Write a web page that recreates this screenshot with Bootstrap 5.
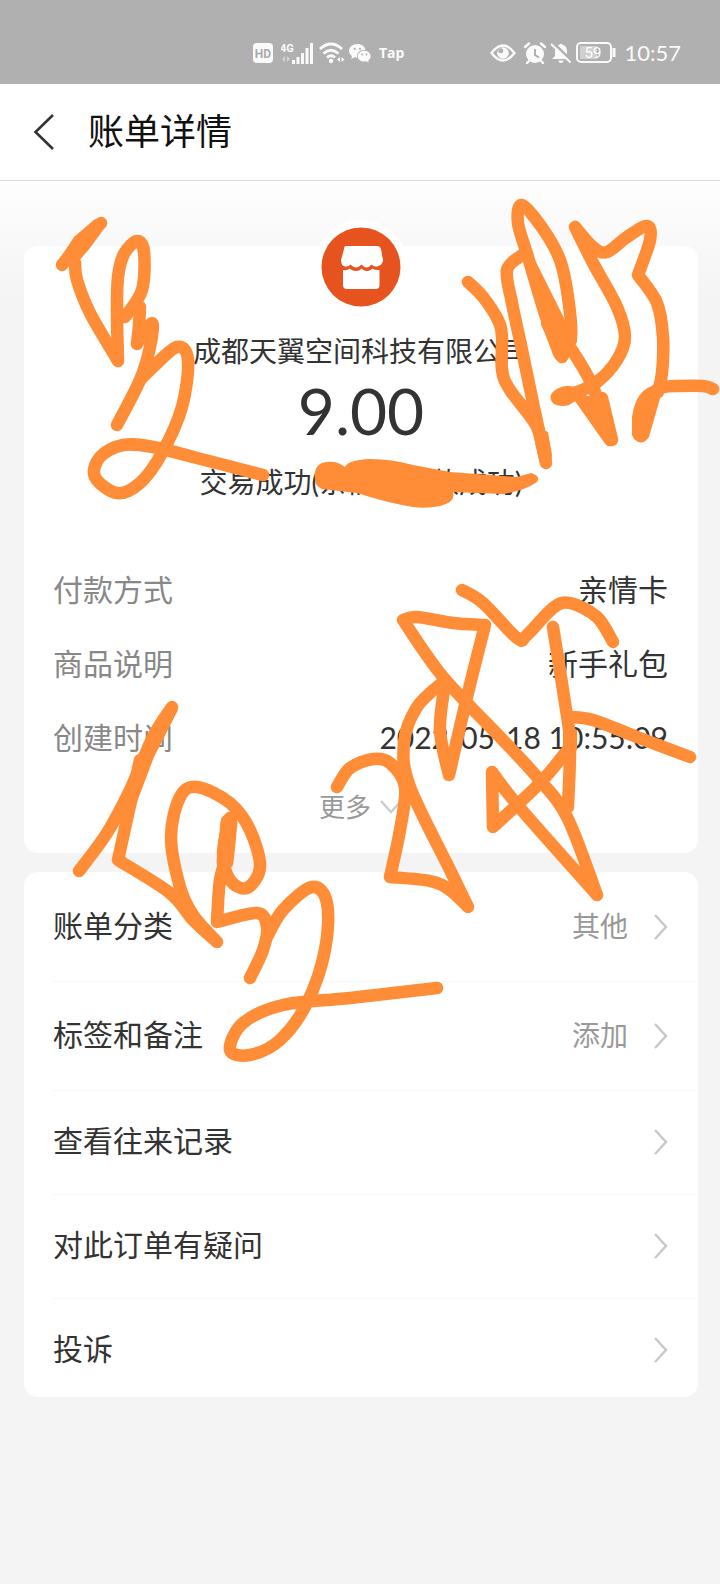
<!DOCTYPE html>
<html lang="zh-CN">
<head>
<meta charset="utf-8">
<meta name="viewport" content="width=device-width, initial-scale=1">
<title>账单详情</title>
<link rel="stylesheet" href="https://cdn.jsdelivr.net/npm/bootstrap@5.3.0/dist/css/bootstrap.min.css">
<style>
body { background: #f4f4f4; color: #333; font-family: Lato, "Noto Sans CJK SC", sans-serif; font-size: 30px; line-height: 44px; overflow-x: hidden; }
.screen { min-height: 100vh; }
.status-bar { height: 84px; padding: 43px 39px 0 0; background: #b0b0b0; color: #fafafa; }
.status-bar svg { display: block; flex: none; }
.status-group { height: 20px; }
.status-group + .status-group { margin-left: 86px; }
.tap-label { font: 700 14px/20px "Open Sans", sans-serif; }
.hd-label, .net-label, .level-label { font-family: Roboto, sans-serif; }
.clock { font-size: 22px; line-height: 24px; }
.title-bar { height: 97px; padding: 0 32px; background: #fff; border-bottom: 1px solid #dadada; }
.title-bar h1 { font-size: 36px; line-height: 48px; padding-bottom: 2px; color: #111; }
.back-btn { width: 24px; height: 40px; }
.content-area { padding: 65px 22px 0 24px; background: linear-gradient(#fefefe, #f4f4f4 120px); }
.panel { background: #fff; border-radius: 14px; }
.bill { height: 607px; }
.shop-logo { width: 96px; height: 96px; margin-top: -27px; }
.shop-name { font-size: 28px; line-height: 40px; margin-top: 16px; }
.amount { font-size: 64px; line-height: 72px; margin-top: 4px; }
.result { font-size: 28px; line-height: 40px; margin-top: 15px; margin-bottom: 65px; }
.detail-row { padding: 0 30px 0 29px; margin-bottom: 30px; }
.detail-row dt { color: #888; }
.soft-text { color: #999; }
.more-btn { font-size: 26px; line-height: 36px; }
.options { margin-top: 19px; }
.option { height: 104px; padding: 0 30px 0 29px; color: #333; position: relative; }
.option.tall { height: 109px; }
.option:last-child { height: 99px; padding-top: 4px; }
.option span { padding-bottom: 4px; }
.option + .option::before { content: ""; position: absolute; top: 0; left: 28px; right: 0; height: 1px; background: #f8f8f8; }
.option .soft-text { font-size: 28px; padding-bottom: 2px; margin-right: 26px; }
.ink { position: absolute; top: 0; left: 0; pointer-events: none; }
</style>
</head>
<body>
<div class="screen position-relative">
  <div class="status-bar d-flex align-items-start justify-content-end">
    <div class="status-group d-flex align-items-center">
      <svg width="20" height="20" viewBox="0 0 20 20"><rect width="20" height="20" rx="4" fill="#fafafa"/><text class="hd-label" x="10" y="15" font-size="12" font-weight="700" text-anchor="middle" fill="#aaa">HD</text></svg>
      <svg class="ms-2" width="34" height="22" viewBox="0 0 34 22" fill="#fafafa"><text class="net-label" x="-1" y="10" font-size="11" font-weight="700">4G</text><g opacity=".5"><path d="M1 17l3-3v6zM9 17l-3-3v6z"/></g><path d="M11 18h3v4h-3zM15.500 15h3v7h-3zM20 11h3v11h-3zM24.500 6h3v16h-3zM29 1h3v21h-3z"/></svg>
      <svg class="ms-1" width="26" height="22" viewBox="0 0 26 22" fill="none" stroke="#fafafa" stroke-width="2.800"><path d="M1 7Q12 -3 23 7M4.500 11.500Q12 5 19.500 11.500M8 15.500Q12 12 16 15.500"/><circle cx="12" cy="19" r="2.200" fill="#fafafa" stroke="none"/><path d="M21 15v5l-3-2.500zM22.500 15v5l3-2.500z" fill="#fafafa" stroke="none"/></svg>
      <svg class="ms-1" width="22" height="20" viewBox="0 0 22 20" fill="#fafafa"><path d="M8.500 1C3.500 1 0 4 0 7.800c0 2.200 1.200 4 3 5.200l-.7 3 3.200-1.700 2.500.4C7.500 9.500 11 6.500 16.500 6.700 15.500 3.200 12.500 1 8.500 1z"/><path d="M15.300 7.700c-3.800 0-6.600 2.500-6.600 5.500s2.800 5.400 6.600 5.400l2-.3 2.400 1.300-.5-2.200c1.600-1 2.500-2.500 2.500-4.200 0-3-2.700-5.500-6.400-5.500z"/><g fill="#b0b0b0"><circle cx="5.700" cy="5.800" r="1.100"/><circle cx="11" cy="5.800" r="1.100"/><circle cx="13.200" cy="11.600" r="1"/><circle cx="17.500" cy="11.600" r="1"/></g></svg>
      <span class="tap-label ms-2">Tap</span>
    </div>
    <div class="status-group d-flex align-items-center">
      <svg width="26" height="20" viewBox="0 0 26 20"><path d="M1.500 10Q13-5 24.500 10 13 25 1.500 10z" fill="none" stroke="#fafafa" stroke-width="2.400"/><circle cx="13" cy="10" r="5.800" fill="#fafafa"/><circle cx="10.800" cy="7.800" r="2.500" fill="#b0b0b0"/></svg>
      <svg class="ms-2" width="22" height="22" viewBox="0 0 22 22"><circle cx="11" cy="12" r="9" fill="#fafafa"/><path d="M1 5l4-3.500M21 5l-4-3.500M5 19l-2 2M17 19l2 2" stroke="#fafafa" stroke-width="2.400" stroke-linecap="round"/><path d="M11 7v6l4 2.500" fill="none" stroke="#aaa" stroke-width="1.800"/></svg>
      <svg class="ms-1" width="22" height="22" viewBox="0 0 22 22" fill="#fafafa"><path d="M2 17l3-3V9c0-3 2-5.500 4.500-6.200a1.600 1.600 0 013 0C15.500 3.500 17 6 17 9v5l3 3zM8.500 18.500h5a2.500 2.500 0 01-5 0z"/><path d="M2.500 0L22 19" stroke="#b0b0b0" stroke-width="2.500"/><path d="M1 2l19.500 18.500" stroke="#fafafa" stroke-width="2"/></svg>
      <svg class="ms-1" width="40" height="22" viewBox="0 0 40 22"><rect x="1" y="1" width="34" height="19" rx="4" fill="none" stroke="#fafafa" stroke-width="2"/><path d="M4 4h17v13H4z" fill="#d0d0d0"/><path d="M38 6v9" stroke="#fafafa" stroke-width="3"/><text class="level-label" x="17" y="16" font-size="15" text-anchor="middle" fill="#fff">59</text></svg>
      <span class="clock ms-2">10:57</span>
    </div>
  </div>

  <header class="title-bar d-flex align-items-center">
    <button type="button" class="back-btn btn p-0 border-0 d-flex align-items-center" aria-label="返回"><svg width="24" height="36" viewBox="0 0 24 36" fill="none" stroke="#333" stroke-width="2.600"><path d="M21 1L3.500 18 21 35"/></svg></button>
    <h1 class="fw-normal mb-0 ms-4 ps-2">账单详情</h1>
  </header>

  <main class="content-area">
    <section class="bill panel d-flex flex-column">
      <div class="text-center">
        <svg class="shop-logo d-block mx-auto" viewBox="0 0 96 96"><circle cx="48" cy="48" r="47" fill="#fff"/><circle cx="48" cy="48" r="39.500" fill="#e6531e"/><path d="M33 27h31q3 0 4 3l2 11c0 4-4 7-8 6.500q-2-.5-3.500-2-2.500 3-5 3t-5-3q-2.500 3-5.500 3t-5.500-3q-2 2-3.500 2c-4 .5-6-2.500-6-6.500l3-11q0-3 2-3z" fill="#fff"/><path d="M30 51q4 1 6.500-1.500 3 2.500 6.500 2.500t5.500-2.500q2.500 2.500 5.500 2.500t5.500-2.500q3 2 7 1.500v15q0 4-4 4H34q-4 0-4-4z" fill="#fff"/></svg>
        <div class="shop-name">成都天翼空间科技有限公司</div>
        <div class="amount">9.00</div>
        <div class="result">交易成功(亲情卡付款成功)</div>
      </div>
      <dl class="mb-0">
        <div class="detail-row d-flex justify-content-between"><dt class="fw-normal">付款方式</dt><dd class="mb-0">亲情卡</dd></div>
        <div class="detail-row d-flex justify-content-between"><dt class="fw-normal">商品说明</dt><dd class="mb-0">新手礼包</dd></div>
        <div class="detail-row d-flex justify-content-between"><dt class="fw-normal">创建时间</dt><dd class="mb-0">2022-05-18 10:55:09</dd></div>
      </dl>
      <button type="button" class="more-btn soft-text btn p-0 border-0 mx-auto d-flex align-items-center gap-2">更多<svg width="24" height="14" viewBox="0 0 24 14" fill="none" stroke="#ccc" stroke-width="2.400"><path d="M2 1l10 11L22 1"/></svg></button>
    </section>

    <nav class="options panel">
      <a href="#" class="option tall d-flex align-items-center text-decoration-none"><span class="me-auto">账单分类</span><span class="soft-text">其他</span><svg width="14" height="26" viewBox="0 0 14 26" fill="none" stroke="#c8c8c8" stroke-width="2.400"><path d="M1 1l11 12L1 25"/></svg></a>
      <a href="#" class="option tall d-flex align-items-center text-decoration-none"><span class="me-auto">标签和备注</span><span class="soft-text">添加</span><svg width="14" height="26" viewBox="0 0 14 26" fill="none" stroke="#c8c8c8" stroke-width="2.400"><path d="M1 1l11 12L1 25"/></svg></a>
      <a href="#" class="option d-flex align-items-center text-decoration-none"><span class="me-auto">查看往来记录</span><svg width="14" height="26" viewBox="0 0 14 26" fill="none" stroke="#c8c8c8" stroke-width="2.400"><path d="M1 1l11 12L1 25"/></svg></a>
      <a href="#" class="option d-flex align-items-center text-decoration-none"><span class="me-auto">对此订单有疑问</span><svg width="14" height="26" viewBox="0 0 14 26" fill="none" stroke="#c8c8c8" stroke-width="2.400"><path d="M1 1l11 12L1 25"/></svg></a>
      <a href="#" class="option d-flex align-items-center text-decoration-none"><span class="me-auto">投诉</span><svg width="14" height="26" viewBox="0 0 14 26" fill="none" stroke="#c8c8c8" stroke-width="2.400"><path d="M1 1l11 12L1 25"/></svg></a>
    </nav>
  </main>

  <!-- freehand marker strokes over the bill -->
  <svg class="ink" id="ink" width="720" height="1100" viewBox="0 0 720 1100" fill="none" stroke="#ff8c37" stroke-width="12.500" stroke-linecap="round" stroke-linejoin="round" aria-hidden="true">
    <g fill="#ff8c37" stroke="none">
      <path d="M315 480Q313 467 322 463 335 459 345 467 348 460 370 459 392 459 413 465L450 472 517 477 531 473Q541 476 537 482 524 491 503 494L453 492Q456 502 440 506 426 509 413 507 388 503 357 493L322 489Q315 486 315 480z"/>
      <path d="M527 253L541 312 541 325 557 357Q562 364 567 359L577 342 577 320 565 320 536 262z"/>
      <path d="M542 325L550 320 562 350 562 362Q556 362 553 355z"/>
      <path d="M551 400C548 392 560 386 568 386L578 387 582 397 569 405C562 407 553 406 551 400z"/>
      <path d="M632 435L632 417Q636 390 653 386L663 388 649 437Q642 447 634 439z"/>
      <path d="M165 708L178 710 154 757 129 823 118 815 140 760z"/>
      <path d="M57 263L74 237 95 219 106 226 90 248 78 262z"/>
      <path d="M531 425L548 432 552 455 551 464 540 464z"/>
      <path d="M563 730L577 730 577 750 563 757z"/>
    </g>
  </svg>
</div>
<script src="https://cdn.jsdelivr.net/npm/bootstrap@5.3.0/dist/js/bootstrap.bundle.min.js"></script>
<script>
// Each stroke is a list of x,y points; "/" marks a sharp corner at the point before it.
const strokes = [
  '62,265 80,243 101,223',
  '75,263 77,280 90,313 118,361 / 117,313 118,277 124,254 137,241 144,252 142,290 125,317',
  '140,307 139,325 137,344 / 152,323 150,347 140,380 117,425',
  '140,380 153,367 177,347 188,360 182,407 162,453 140,483 117,493 95,477 100,457 123,445 153,447 197,458 263,475',
  '468,282 483,297 498,320 502,337 502,370 510,390 537,427 546,463 / 533,403 522,350 512,303 507,270 522,255',
  '562,357 547,320 528,257 518,223 522,205 543,229 560,260 568,297 571,337 562,357',
  '572,350 593,387 610,440 / 579,396',
  '602,398 612,440 / 588,402',
  '560,397 575,393 597,382 617,360 625,337 617,307 593,263 575,227 / 593,247 607,252 627,237 647,226 650,240 638,275 / 657,303 663,337 662,373 658,392',
  '655,391 664,387 677,386 703,386 713,389',
  '462,590 483,603 517,638 527,635 553,608 570,603 597,617 613,642',
  '553,627 565,703 570,743 568,807',
  '570,717 593,720 637,737 690,757',
  '570,747 540,783 493,827 / 492,772 / 520,808 597,895 / 567,817 537,777 500,737 443,677 403,620 / 417,617 453,623 485,625 / 467,697 449,775 / 440,730 445,683',
  '443,682 417,707 404,743 410,787 450,870 468,907 / 450,890 430,881 390,877 / 400,830 405,787 390,763 373,759 350,768 337,787',
  '172,707 153,737 130,790 107,833 79,871',
  '140,760 118,860 / 170,893 193,920 217,942 / 193,915 180,887 171,837 180,797 197,787 230,803 250,830 260,867 247,888 230,880 223,853 230,818',
  '230,820 228,850 220,880 217,922 / 257,913 267,927 263,950 250,978',
  '267,937 283,910 312,887 327,903 325,950 307,1003 280,1040 250,1055 230,1050 243,1023 283,1005 350,998 437,988'
];
const ink = document.getElementById('ink');
const addPath = (d, width) => {
  const p = document.createElementNS('http://www.w3.org/2000/svg', 'path');
  p.setAttribute('d', d);
  if (width) p.setAttribute('stroke-width', width);
  ink.appendChild(p);
};
const smooth = pts => pts.slice(0, -1).map((b, i) => {
  const a = pts[i - 1] || b, c = pts[i + 1], e = pts[i + 2] || c;
  return `C${b[0] + (c[0] - a[0]) / 6} ${b[1] + (c[1] - a[1]) / 6} ${c[0] - (e[0] - b[0]) / 6} ${c[1] - (e[1] - b[1]) / 6} ${c[0]} ${c[1]}`;
}).join('');
strokes.forEach(line => {
  let last = null, d = '';
  line.split(' / ').forEach(part => {
    const pts = part.split(' ').map(p => p.split(',').map(Number));
    if (last) pts.unshift(last); else d = `M${pts[0][0]} ${pts[0][1]}`;
    d += smooth(pts);
    last = pts[pts.length - 1];
  });
  addPath(d);
});
addPath('M229 822L225 862', 17);
</script>
</body>
</html>
